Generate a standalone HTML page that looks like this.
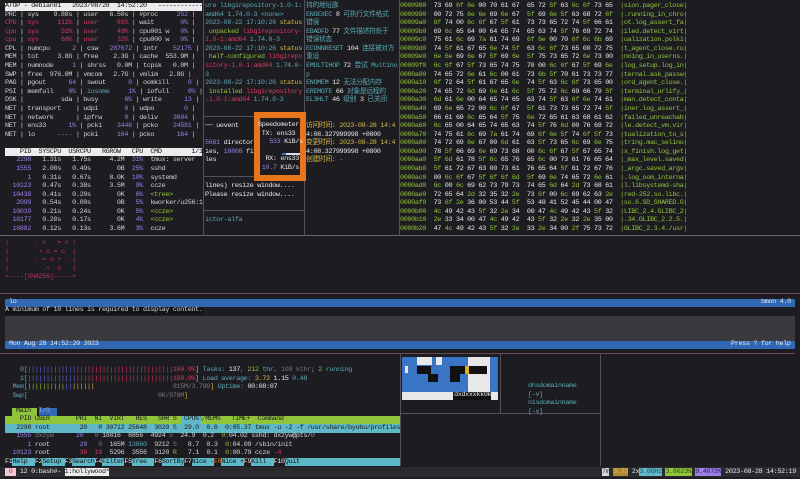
<!DOCTYPE html>
<html><head><meta charset="utf-8"><style>
html,body{margin:0;padding:0;background:#1d1c21;width:800px;height:479px;overflow:hidden;}
pre{position:absolute;margin:0;font-family:"Liberation Mono","Noto Sans CJK SC",monospace;font-size:6.8px;letter-spacing:-0.35px;line-height:8.58px;color:#d2d2d2;white-space:pre;}
.a{position:absolute;}
.t{color:#5aa9b5}.y{color:#d4b84a}.r{color:#dc3462}.p{color:#9a7ee6}.g{color:#8fc43b}.w{color:#e8e8e8}.d{color:#777}
.hl{background:#ececec;color:#111}
</style></head><body>

<!-- borders -->
<div class="a" style="left:203px;top:0;width:1px;height:236px;background:#55505a"></div>
<div class="a" style="left:304px;top:0;width:1px;height:236px;background:#55505a"></div>
<div class="a" style="left:399px;top:0;width:1px;height:236px;background:#55505a"></div>
<div class="a" style="left:204px;top:116px;width:100px;height:1px;background:#55505a"></div>
<div class="a" style="left:204px;top:176px;width:100px;height:1px;background:#55505a"></div>
<div class="a" style="left:204px;top:210px;width:100px;height:1px;background:#55505a"></div>
<div class="a" style="left:0;top:235px;width:800px;height:1px;background:#6a6470"></div>
<div class="a" style="left:0;top:293px;width:800px;height:1px;background:#6a4a5a"></div>
<div class="a" style="left:0;top:353px;width:795px;height:1px;background:#6a4a5a"></div>
<div class="a" style="left:400px;top:354px;width:1px;height:112px;background:#55505a"></div>
<div class="a" style="left:500px;top:354px;width:1px;height:59px;background:#55505a"></div>
<div class="a" style="left:600px;top:354px;width:1px;height:112px;background:#55505a"></div>
<div class="a" style="left:400px;top:413px;width:200px;height:1px;background:#55505a"></div>

<!-- atop -->
<div class="a hl" style="left:5px;top:3px;width:197px;height:8px"></div>
<div class="a hl" style="left:5px;top:148px;width:197px;height:8px"></div>
<pre style="left:5px;top:2px"><span style="color:#111">ATOP - debian01   2023/08/28  14:52:20   -----------------</span>
PRC | sys    9.88s | user   6.50s | #proc     <span class="p">252</span> |
<span class="r">CPU</span> | <span class="r">sys     111%</span> | <span class="r">user     81%</span> | wait       <span class="p">0%</span> |
<span class="r">cpu</span> | <span class="r">sys      51%</span> | <span class="r">user     49%</span> | cpu001 w   <span class="p">0%</span> |
<span class="r">cpu</span> | <span class="r">sys      60%</span> | <span class="r">user     32%</span> | cpu000 w   <span class="p">0%</span> |
CPL | numcpu      <span class="p">2</span> | csw   <span class="p">287672</span> | intr    <span class="p">52175</span> |
MEM | tot     3.8G | free    2.3G | cache  553.9M |
MEM | numnode     <span class="p">1</span> | shrss   0.0M | tcpsk   0.0M |
SWP | free  976.0M | vmcom   2.7G | vmlim   2.8G |
PAG | pgout      <span class="p">64</span> | swout      <span class="p">0</span> | oomkill     <span class="p">0</span> |
PSI | memfull    <span class="p">0%</span> | <span class="t">iosome</span>     <span class="p">1%</span> | iofull     <span class="p">0%</span> |
DSK |          sda | busy       <span class="p">6%</span> | write      <span class="p">13</span> |
NET | transport    | udpi       <span class="p">0</span> | udpo        <span class="p">0</span> |
NET | network      | ipfrw      <span class="p">0</span> | deliv    <span class="p">3604</span> |
NET | ens33      <span class="p">1%</span> | pcki    <span class="p">3448</span> | pcko    <span class="p">24581</span> |
NET | lo      <span class="p">----</span> | pcki     <span class="p">164</span> | pcko      <span class="p">164</span> |

<span style="color:#111">    PID  SYSCPU  USRCPU   RGROW   CPU  CMD        1/156</span>
   <span class="p">2298</span>   1.31s   1.75s     4.2M  <span class="p">31%</span>  tmux: server
   <span class="p">1555</span>   2.00s   0.49s       0B  <span class="p">25%</span>  sshd
      <span class="p">1</span>   0.31s   0.67s     8.0K  <span class="p">10%</span>  systemd
  <span class="p">10123</span>   0.47s   0.38s     3.5M   <span class="p">9%</span>  ccze
  <span class="p">10438</span>   0.41s   0.20s       0K   <span class="p">6%</span>  <span class="g">&lt;tree&gt;</span>
   <span class="p">2099</span>   0.54s   0.00s       0B   <span class="p">5%</span>  kworker/u256:1
  <span class="p">10039</span>   0.21s   0.24s       0K   <span class="p">5%</span>  <span class="g">&lt;ccze&gt;</span>
  <span class="p">10177</span>   0.20s   0.17s       0K   <span class="p">4%</span>  <span class="g">&lt;ccze&gt;</span>
  <span class="p">10882</span>   0.12s   0.13s     3.6M   <span class="p">3%</span>  ccze</pre>

<!-- middle pane -->
<pre style="left:205px;top:2px" class="t">ure libgirepository-1.0-1:
amd64 1.74.0-3 &lt;none&gt;
2023-08-22 17:10:26 <span class="y">status</span>
<span class="g"> unpacked</span> <span class="r">libgirepository-</span>
<span class="r">1.0-1:amd64</span> 1.74.0-3
2023-08-22 17:10:26 <span class="y">status</span>
<span class="g"> half-configured</span> <span class="r">libgirepo</span>
<span class="r">sitory-1.0-1:amd64</span> 1.74.0-
3
2023-08-22 17:10:26 <span class="y">status</span>
<span class="g"> installed</span> <span class="r">libgirepository</span>
<span class="r">-1.0-1:amd64</span> 1.74.0-3


<span class="w">── uevent</span>

<span class="p">5661</span><span class="w"> director</span>
<span class="w">ies, </span><span class="p">18808</span><span class="w"> fi</span>
<span class="w">les</span>


<span class="w">lines) resize window....</span>
<span class="w">Please resize window....</span>


ictor-alfa</pre>

<!-- speedometer -->
<div class="a" style="left:254px;top:112px;width:40px;height:57px;border:6px solid #e8741c;background:#1d1c21"></div>
<pre style="left:258px;top:121px" class="w">Speedometer
 TX: ens33
   <span class="p">533</span> KiB/s

  RX: ens33
 <span class="p">10.7</span> KiB/s</pre>
<div class="a" style="left:286px;top:153px;width:14px;height:2px;background:#d8d8f0"></div>
<div class="a" style="left:282px;top:153px;width:4px;height:2px;background:#4a6ab0"></div>

<!-- chinese pane -->
<pre style="left:306px;top:2px" class="t">持的地址族
ENOEXEC <span class="w">8</span> 可执行文件格式
错误
EBADFD <span class="w">77</span> 文件描述符处于
错误状态
ECONNRESET <span class="w">104</span> 连接被对方
重设
EMULTIHOP <span class="w">72</span> 尝试 Multiho
p
ENOMEM <span class="w">12</span> 无法分配内存
EREMOTE <span class="w">66</span> 对象是远程的
EL3HLT <span class="w">46</span> 级别 <span class="w">3</span> 已关闭


<span class="y">访问时间: 2023-08-28 14:4</span>
<span class="w">4:08.327999998 +0800</span>
<span class="y">变更时间: 2023-08-28 14:4</span>
<span class="w">4:08.327999998 +0800</span>
<span class="y">创建时间: -</span></pre>

<!-- hex -->
<pre style="left:400px;top:2px" class="w"><span class="g">0000980</span>  73 69 <span class="g">6f 6e</span> 00 70 61 67  65 72 <span class="g">5f</span> 63 <span class="g">6c 6f</span> 73 65  <span class="g">|sion.pager_close|</span>
<span class="g">0000990</span>  00 72 75 <span class="g">6e 6e</span> 69 <span class="g">6e</span> 67  <span class="g">5f</span> 69 <span class="g">6e 5f</span> 63 68 72 <span class="g">6f</span>  <span class="g">|.running_in_chro|</span>
<span class="g">00009a0</span>  <span class="g">6f</span> 74 00 <span class="g">6c 6f</span> 67 <span class="g">5f</span> 61  73 73 65 72 74 <span class="g">5f</span> 66 61  <span class="g">|ot.log_assert_fa|</span>
<span class="g">00009b0</span>  69 <span class="g">6c</span> 65 64 00 64 65 74  65 63 74 <span class="g">5f</span> 76 69 72 74  <span class="g">|iled.detect_virt|</span>
<span class="g">00009c0</span>  75 61 <span class="g">6c</span> 69 <span class="g">7a</span> 61 74 69  <span class="g">6f 6e</span> 00 70 <span class="g">6f 6c 6b</span> 69  <span class="g">|ualization.polki|</span>
<span class="g">00009d0</span>  74 <span class="g">5f</span> 61 67 65 <span class="g">6e</span> 74 <span class="g">5f</span>  63 <span class="g">6c 6f</span> 73 65 00 72 75  <span class="g">|t_agent_close.ru|</span>
<span class="g">00009e0</span>  <span class="g">6e 6e</span> 69 <span class="g">6e</span> 67 <span class="g">5f</span> 69 <span class="g">6e</span>  <span class="g">5f</span> 75 73 65 72 <span class="g">6e</span> 73 00  <span class="g">|nning_in_userns.|</span>
<span class="g">00009f0</span>  <span class="g">6c 6f</span> 67 <span class="g">5f</span> 73 65 74 75  70 00 <span class="g">6c 6f</span> 67 <span class="g">5f</span> 69 <span class="g">6e</span>  <span class="g">|log_setup.log_in|</span>
<span class="g">0000a00</span>  74 65 72 <span class="g">6e</span> 61 <span class="g">6c</span> 00 61  73 <span class="g">6b 5f</span> 70 61 73 73 77  <span class="g">|ternal.ask_passw|</span>
<span class="g">0000a10</span>  <span class="g">6f</span> 72 64 <span class="g">5f</span> 61 67 65 <span class="g">6e</span>  74 <span class="g">5f</span> 63 <span class="g">6c 6f</span> 73 65 00  <span class="g">|ord_agent_close.|</span>
<span class="g">0000a20</span>  74 65 72 <span class="g">6d</span> 69 <span class="g">6e</span> 61 <span class="g">6c</span>  <span class="g">5f</span> 75 72 <span class="g">6c</span> 69 66 79 <span class="g">5f</span>  <span class="g">|terminal_urlify_|</span>
<span class="g">0000a30</span>  <span class="g">6d</span> 61 <span class="g">6e</span> 00 64 65 74 65  63 74 <span class="g">5f</span> 63 <span class="g">6f 6e</span> 74 61  <span class="g">|man.detect_conta|</span>
<span class="g">0000a40</span>  69 <span class="g">6e</span> 65 72 00 <span class="g">6c 6f</span> 67  <span class="g">5f</span> 61 73 73 65 72 74 <span class="g">5f</span>  <span class="g">|iner.log_assert_|</span>
<span class="g">0000a50</span>  66 61 69 <span class="g">6c</span> 65 64 <span class="g">5f</span> 75  <span class="g">6e</span> 72 65 61 63 68 61 62  <span class="g">|failed_unreachab|</span>
<span class="g">0000a60</span>  <span class="g">6c</span> 65 00 64 65 74 65 63  74 <span class="g">5f</span> 76 <span class="g">6d</span> 00 76 69 72  <span class="g">|le.detect_vm.vir|</span>
<span class="g">0000a70</span>  74 75 61 <span class="g">6c</span> 69 <span class="g">7a</span> 61 74  69 <span class="g">6f 6e 5f</span> 74 <span class="g">6f 5f</span> 73  <span class="g">|tualization_to_s|</span>
<span class="g">0000a80</span>  74 72 69 <span class="g">6e</span> 67 00 <span class="g">6d</span> 61  63 <span class="g">5f</span> 73 65 <span class="g">6c</span> 69 <span class="g">6e</span> 75  <span class="g">|tring.mac_selinu|</span>
<span class="g">0000a90</span>  78 <span class="g">5f</span> 66 69 <span class="g">6e</span> 69 73 68  00 <span class="g">6c 6f</span> 67 <span class="g">5f</span> 67 65 74  <span class="g">|x_finish.log_get|</span>
<span class="g">0000aa0</span>  <span class="g">5f 6d</span> 61 78 <span class="g">5f 6c</span> 65 76  65 <span class="g">6c</span> 00 73 61 76 65 64  <span class="g">|_max_level.saved|</span>
<span class="g">0000ab0</span>  <span class="g">5f</span> 61 72 67 63 00 73 61  76 65 64 <span class="g">5f</span> 61 72 67 76  <span class="g">|_argc.saved_argv|</span>
<span class="g">0000ac0</span>  00 <span class="g">6c 6f</span> 67 <span class="g">5f 6f 6f 6d</span>  <span class="g">5f</span> 69 <span class="g">6e</span> 74 65 72 <span class="g">6e</span> 61  <span class="g">|.log_oom_interna|</span>
<span class="g">0000ad0</span>  <span class="g">6c</span> 00 <span class="g">6c</span> 69 62 73 79 73  74 65 <span class="g">6d</span> 64 <span class="g">2d</span> 73 68 61  <span class="g">|l.libsystemd-sha|</span>
<span class="g">0000ae0</span>  72 65 64 <span class="g">2d</span> 32 35 32 <span class="g">2e</span>  73 <span class="g">6f</span> 00 <span class="g">6c</span> 69 62 63 <span class="g">2e</span>  <span class="g">|red-252.so.libc.|</span>
<span class="g">0000af0</span>  73 <span class="g">6f 2e</span> 36 00 53 44 <span class="g">5f</span>  53 48 41 52 45 44 00 47  <span class="g">|so.6.SD_SHARED.G|</span>
<span class="g">0000b00</span>  <span class="g">4c</span> 49 42 43 <span class="g">5f</span> 32 <span class="g">2e</span> 34  00 47 <span class="g">4c</span> 49 42 43 <span class="g">5f</span> 32  <span class="g">|LIBC_2.4.GLIBC_2|</span>
<span class="g">0000b10</span>  <span class="g">2e</span> 33 34 00 47 <span class="g">4c</span> 49 42  43 <span class="g">5f</span> 32 <span class="g">2e</span> 32 <span class="g">2e</span> 35 00  <span class="g">|.34.GLIBC_2.2.5.|</span>
<span class="g">0000b20</span>  47 <span class="g">4c</span> 49 42 43 <span class="g">5f</span> 32 <span class="g">2e</span>  33 <span class="g">2e</span> 34 00 <span class="g">2f</span> 75 73 72  <span class="g">|GLIBC_2.3.4./usr|</span></pre>

<!-- ssh art -->
<pre style="left:5px;top:239px;color:#b8305a">|       . o   = o |
|        + o = o  |
|       . = o + . |
|         .+  o   |
+----[SHA256]-----+</pre>

<!-- bmon -->
<div class="a" style="left:5px;top:299px;width:790px;height:8px;background:#3068b4"></div>
<div class="a" style="left:5px;top:307px;width:198px;height:8px;background:#141417"></div>
<div class="a" style="left:5px;top:316px;width:790px;height:25px;background:#3a393e"></div>
<div class="a" style="left:5px;top:341px;width:790px;height:8px;background:#3068b4"></div>
<pre style="left:9px;top:298px;color:#e8e8f0">lo</pre>
<pre style="left:761px;top:298px;color:#e8e8f0">bmon 4.0</pre>
<pre style="left:5px;top:306px">A minimum of 10 lines is required to display content.</pre>
<pre style="left:9px;top:340px;color:#e8e8f0">Mon Aug 28 14:52:20 2023</pre>
<pre style="left:731px;top:340px;color:#e8e8f0">Press ? for help</pre>

<!-- htop -->
<pre style="left:5px;top:366px"><span class="t">    0[</span><span style="color:#5c6ee0">|||||||||||||</span><span class="r">||||||||||||||||||||||||||</span><span class="r">100.0%</span><span class="y">]</span> <span class="t">Tasks: </span><span class="w">137</span><span class="t">, </span><span class="g">212</span><span class="t"> thr, </span><span class="d">109 kthr</span><span class="t">; </span><span class="g">2</span><span class="t"> running</span>
<span class="t">    1[</span><span style="color:#5c6ee0">|||||||||||||</span><span class="r">||||||||||||||||||||||||||</span><span class="r">100.0%</span><span class="y">]</span> <span class="t">Load average: </span><span class="y">3.73</span><span class="w"> 1.15 </span><span class="t">0.48</span>
<span class="t">  Mem[</span><span class="g">||||||||||</span><span style="color:#5c6ee0">||</span><span class="y">||||||</span>                     <span class="d">815M/3.79G</span><span class="y">]</span> <span class="t">Uptime: </span><span class="w">00:08:07</span>
<span class="t">  Swp[</span>                                   <span class="d">0K/976M</span><span class="y">]</span></pre>
<div class="a" style="left:12px;top:408px;width:25px;height:8px;background:#8fc43b"></div>
<div class="a" style="left:39px;top:408px;width:18px;height:8px;background:#3068b4"></div>
<pre style="left:16px;top:407px;color:#1a1a1a">Main  <span style="color:#8ab0e0">I/O</span></pre>
<div class="a" style="left:5px;top:416px;width:395px;height:8px;background:#8fc43b"></div>
<div class="a" style="left:181px;top:416px;width:20px;height:8px;background:#5fb8c8"></div>
<div class="a" style="left:5px;top:424px;width:395px;height:9px;background:#5fb8c8"></div>
<pre style="left:5px;top:415px"><span style="color:#1a1a1a">    PID USER       PRI  NI  VIRT   RES   SHR S  CPU%▽MEM%   TIME+  Command</span>
<span style="color:#1a1a1a">   2298 root        20   0 30712 25648  3020 S  29.0  0.6  0:05.37 tmux -u -2 -f /usr/share/byobu/profiles</span>
   <span class="p">1555</span> <span class="d">dxzyw</span>      <span class="p">20</span>   <span class="d">0</span> 18016  6856  4924 <span class="d">S</span>  24.9  0.2  <span class="g">0:</span>04.02 sshd: dxzyw@pts/<span class="p">0</span>
      <span class="p">1</span> root        <span class="p">20</span>   <span class="d">0</span>  165M <span class="t">13860</span>  9212 <span class="d">S</span>   8.7  0.3  <span class="g">0:</span>04.09 /sbin/init
  <span class="p">10123</span> root        <span class="r">39</span>  <span class="r">19</span>  5296  3556  3120 <span class="g">R</span>   7.1  0.1  <span class="g">0:</span>00.79 ccze <span class="r">-4</span></pre>

<!-- F keys -->
<div class="a" style="left:5px;top:458px;width:395px;height:8px;background:#5fb8c8"></div>
<pre style="left:5px;top:458px"><span class="w" style="background:#1d1c21">F1</span><span style="color:#111">Help  </span><span class="w" style="background:#1d1c21">F2</span><span style="color:#111">Setup </span><span class="w" style="background:#1d1c21">F3</span><span style="color:#111">Search</span><span class="w" style="background:#1d1c21">F4</span><span style="color:#111">Filter</span><span class="w" style="background:#1d1c21">F5</span><span style="color:#111">Tree  </span><span class="w" style="background:#1d1c21">F6</span><span style="color:#111">SortBy</span><span class="w" style="background:#1d1c21">F7</span><span style="color:#111">Nice -</span><span style="background:#1d1c21;color:#e8741c">F8</span><span style="color:#111">Nice +</span><span class="w" style="background:#1d1c21">F9</span><span style="color:#111">Kill  </span><span class="w" style="background:#1d1c21">F10</span><span style="color:#111">Quit</span></pre>

<!-- right htop image -->
<div class="a" style="left:402px;top:357px;width:96px;height:35px;background:#3a74c4"></div>
<div class="a" style="left:417px;top:357px;width:15px;height:8px;background:#e8e8e8"></div>
<div class="a" style="left:436px;top:357px;width:6px;height:8px;background:#e8e8e8"></div>
<div class="a" style="left:468px;top:357px;width:22px;height:35px;background:#e8e8e8"></div>
<div class="a" style="left:405px;top:366px;width:3px;height:7px;background:#e8e8e8"></div>
<div class="a" style="left:417px;top:366px;width:14px;height:8px;background:#111"></div>
<div class="a" style="left:450px;top:366px;width:37px;height:8px;background:#111"></div>
<div class="a" style="left:465px;top:366px;width:4px;height:8px;background:#e0b020"></div>
<div class="a" style="left:428px;top:374px;width:10px;height:8px;background:#111"></div>
<div class="a" style="left:450px;top:374px;width:10px;height:8px;background:#111"></div>
<div class="a" style="left:402px;top:392px;width:96px;height:8px;background:#e8e8e8"></div>
<div class="a" style="left:453px;top:392px;width:38px;height:8px;background:#111"></div>
<pre style="left:454px;top:391px" class="w">dxdxxxkk0kk</pre>
<pre style="left:528px;top:382px" class="t">dnsdomainname
[-v]
nisdomainname
[-v]</pre>

<!-- tmux status -->
<div class="a" style="left:0;top:467px;width:800px;height:10px;background:#2a2a2e"></div>
<pre style="left:5px;top:468px"><span style="background:#f0c8d0;color:#c03050"> 0 </span> <span class="w">12 0:bash#- </span><span style="background:#ececec;color:#111">1:hollywood*</span></pre>
<pre style="left:602px;top:468px"><span style="background:#d8d8e0;color:#333">7m</span> <span style="background:#b08a30;color:#e0c060">3.72</span> <span class="w">2x</span><span style="background:#5fb8c8;color:#1a4a60">3.0GHz</span> <span style="background:#8fc43b;color:#2a4a10">3.8023%</span> <span style="background:#9a7ee6;color:#2a1a50">9.4073%</span> <span class="w">2023-08-28 14:52:19</span></pre>
</body></html>
